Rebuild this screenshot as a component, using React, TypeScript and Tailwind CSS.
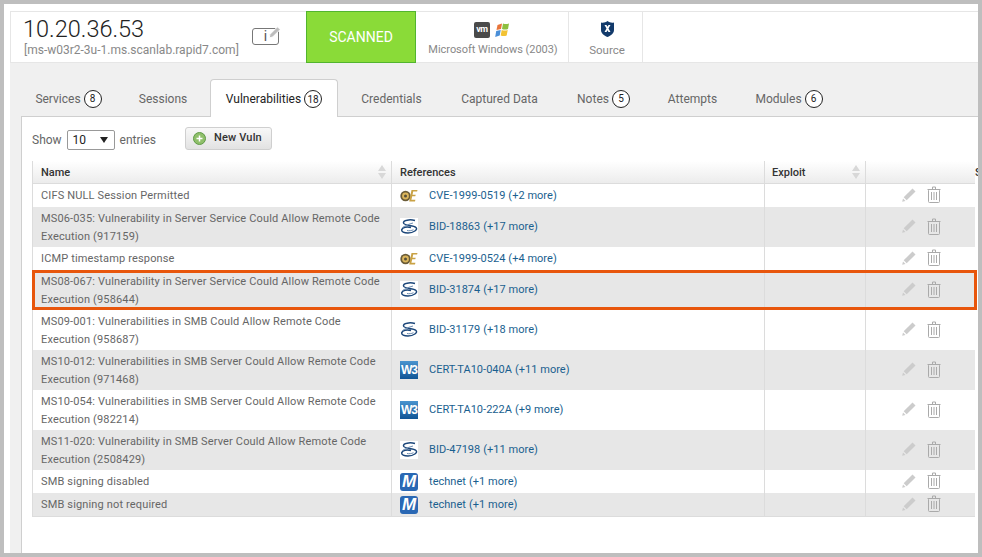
import type { ReactElement, ReactNode } from 'react'

type RefKind = 'cve' | 'bid' | 'w3' | 'ms'

type Vuln = {
  name: string[]
  kind: RefKind
  ref: string
  more: string
  flagged?: boolean
}

const vulns: Vuln[] = [
  { name: ['CIFS NULL Session Permitted'], kind: 'cve', ref: 'CVE-1999-0519', more: '(+2 more)' },
  { name: ['MS06-035: Vulnerability in Server Service Could Allow Remote Code', 'Execution (917159)'], kind: 'bid', ref: 'BID-18863', more: '(+17 more)' },
  { name: ['ICMP timestamp response'], kind: 'cve', ref: 'CVE-1999-0524', more: '(+4 more)' },
  { name: ['MS08-067: Vulnerability in Server Service Could Allow Remote Code', 'Execution (958644)'], kind: 'bid', ref: 'BID-31874', more: '(+17 more)', flagged: true },
  { name: ['MS09-001: Vulnerabilities in SMB Could Allow Remote Code', 'Execution (958687)'], kind: 'bid', ref: 'BID-31179', more: '(+18 more)' },
  { name: ['MS10-012: Vulnerabilities in SMB Server Could Allow Remote Code', 'Execution (971468)'], kind: 'w3', ref: 'CERT-TA10-040A', more: '(+11 more)' },
  { name: ['MS10-054: Vulnerabilities in SMB Server Could Allow Remote Code', 'Execution (982214)'], kind: 'w3', ref: 'CERT-TA10-222A', more: '(+9 more)' },
  { name: ['MS11-020: Vulnerability in SMB Server Could Allow Remote Code', 'Execution (2508429)'], kind: 'bid', ref: 'BID-47198', more: '(+11 more)' },
  { name: ['SMB signing disabled'], kind: 'ms', ref: 'technet', more: '(+1 more)' },
  { name: ['SMB signing not required'], kind: 'ms', ref: 'technet', more: '(+1 more)' },
]

const tabs: { label: string; width: string; count?: number; active?: boolean }[] = [
  { label: 'Services', width: 'w-[95px]', count: 8 },
  { label: 'Sessions', width: 'w-[78px]' },
  { label: 'Vulnerabilities', width: 'w-[128px]', count: 18, active: true },
  { label: 'Credentials', width: 'w-[91px]' },
  { label: 'Captured Data', width: 'w-[109px]' },
  { label: 'Notes', width: 'w-[83px]', count: 5 },
  { label: 'Attempts', width: 'w-[79px]' },
  { label: 'Modules', width: 'w-[98px]', count: 6 },
]

const gridCols = 'grid grid-cols-[359px_373px_101px_110px]'

function CveIcon(): ReactElement {
  return (
    <span className="flex h-[18px] w-[18px] items-center justify-center">
      <svg width="18" height="16" viewBox="0 0 18 16">
        <circle cx="5.500" cy="8" r="5.200" fill="#6a5c38" />
        <circle cx="5.500" cy="8" r="3.400" fill="#dcb65c" />
        <circle cx="5.500" cy="8" r="1.500" fill="#56503a" />
        <path d="M11.500 2h6l-.4 1.400h-3.900l-.7 3.400h3.200l-.4 1.400h-3.100l-.8 3.600h4l-.4 1.700h-5.800z" fill="#c9a245" />
      </svg>
    </span>
  )
}

function BidIcon(): ReactElement {
  return (
    <span className="flex h-[18px] w-[18px] items-center justify-center bg-white">
      <svg width="18" height="18" viewBox="0 0 18 18" fill="none">
        <path d="M15 2.500C10 1.200 3 2 3.500 5c.5 2.800 9.500 2.200 12.500 4.500 2.200 2-2.500 5.500-8 5.500-4 0-6.800-1.200-6.300-3.200.6-2.400 5-3.600 9.300-2.300" stroke="#1b4679" strokeWidth="1.500" />
        <path d="M2.500 9.500C5.500 7.500 9 6 13 5" stroke="#6d8db2" strokeWidth="1" />
        <path d="M7 12.500c2 .5 4.500.2 6.500-.8" stroke="#6d8db2" strokeWidth="1" />
      </svg>
    </span>
  )
}

function W3Icon(): ReactElement {
  return (
    <span className="flex h-[18px] w-[18px] items-center justify-center overflow-hidden bg-gradient-to-b from-[#4a94cf] to-[#0e5596] font-['Liberation_Sans',sans-serif] text-[12px] font-bold tracking-[-0.9px] text-white">
      W3
    </span>
  )
}

function MsIcon(): ReactElement {
  return (
    <span className="flex h-[18px] w-[18px] items-center justify-center overflow-hidden rounded-[3px] bg-[#2a68b4] font-['Liberation_Sans',sans-serif] text-[17px] font-bold italic tracking-normal text-white">
      M
    </span>
  )
}

function RefIcon({ kind }: { kind: RefKind }): ReactElement {
  if (kind === 'cve') return <CveIcon />
  if (kind === 'bid') return <BidIcon />
  if (kind === 'w3') return <W3Icon />
  return <MsIcon />
}

function CountBadge({ children }: { children: ReactNode }): ReactElement {
  return (
    <span className="ml-[3px] flex h-[18px] w-[18px] items-center justify-center rounded-full border border-[#222] bg-white text-[10px] text-[#222]">
      {children}
    </span>
  )
}

function SortArrows(): ReactElement {
  return (
    <svg width="8" height="14" viewBox="0 0 8 14" fill="#d8d8d8">
      <path d="M4 0l4 6H0z" />
      <path d="M4 14l4-6H0z" />
    </svg>
  )
}

function PencilIcon(): ReactElement {
  return (
    <svg width="14" height="14" viewBox="0 0 14 14" fill="#cccccc">
      <path d="M10.500 .5l3 3-8.800 8.800-3-3z" />
      <path d="M1 10.500l2.500 2.500-3.300.8z" />
    </svg>
  )
}

function TrashIcon(): ReactElement {
  return (
    <svg width="14" height="17" viewBox="0 0 14 17" fill="none" stroke="#aaaaaa" strokeWidth="1">
      <path d="M.5 3.500h13M5.500 3.500V1h3v2.500" />
      <rect x="1.500" y="3.500" width="11" height="13" rx="1" />
      <path d="M4.500 6v8M7 6v8M9.500 6v8" />
    </svg>
  )
}

function Row({ vuln, index }: { vuln: Vuln; index: number }): ReactElement {
  const twoLines = vuln.name.length > 1
  return (
    <div className={`${gridCols} relative text-[11px] ${index % 2 === 1 ? 'bg-[#e7e7e7]' : 'bg-white'} ${twoLines ? 'h-[40px]' : 'h-[23px]'}`}>
      <div className={`flex flex-col justify-center border-r border-[#dcdcdc] pl-[8px] leading-[18px] tracking-[0.15px] text-[#666] ${twoLines ? 'pt-[2px]' : ''}`}>
        {vuln.name.map((line) => (
          <span key={line} className="whitespace-nowrap">{line}</span>
        ))}
      </div>
      <div className="flex items-center border-r border-[#dcdcdc] pl-[8px] tracking-[0.03px] text-[#1a5f8f]">
        <RefIcon kind={vuln.kind} />
        <a className={`ml-[11px] ${twoLines ? '' : 'mt-[1px]'}`}>{vuln.ref}</a>
        <span className={`ml-[3px] ${twoLines ? '' : 'mt-[1px]'}`}>{vuln.more}</span>
      </div>
      <div className="border-r border-[#dcdcdc]" />
      <div className="flex items-center justify-center gap-[11px] pb-[2px] pl-[1px]">
        <PencilIcon />
        <TrashIcon />
      </div>
      {vuln.flagged && (
        <div className="absolute -left-px top-0 -right-[2px] bottom-0 border-[3px] border-[#e8560c]" />
      )}
    </div>
  )
}

export default function App(): ReactElement {
  return (
    <div className="h-[557px] w-[982px] overflow-hidden border-4 border-[#bebebe] bg-white pl-[6px] pt-[7px] font-['Roboto',sans-serif] text-[12px]">
      <div className="flex h-[542px] flex-col bg-[#f0f0f0]">
        <header className="flex h-[52px] shrink-0 border-y border-l border-[#e6e6e6] bg-white">
          <div className="w-[228px] pl-[12px]">
            <div className="mt-[4px] text-[23.500px] font-light leading-[26px] text-[#222]">10.20.36.53</div>
            <div className="ml-[1px] mt-[1px] whitespace-nowrap text-[12px] leading-[15px] text-[#888]">[ms-w03r2-3u-1.ms.scanlab.rapid7.com]</div>
          </div>
          <div className="flex w-[67px] items-center pb-[2px] pl-[13px]">
            <span className="relative flex h-[17px] w-[27px] items-center justify-center rounded-[3px] border border-[#777] text-[14px] text-[#555]">
              i
              <svg className="absolute -right-[3px] -top-[3px]" width="13" height="13" viewBox="0 0 13 13" fill="#bdbdbd" stroke="#fff" strokeWidth="1">
                <path d="M9.500 .8l2.700 2.700-7.500 7.500-3.500 1 .8-3.700z" />
              </svg>
            </span>
          </div>
          <div className="-my-px flex w-[110px] items-center justify-center border border-[#52b52e] bg-[#8adb38] text-[14px] text-white">
            SCANNED
          </div>
          <div className="flex w-[153px] flex-col items-center border-r border-[#e6e6e6] pt-[10px]">
            <div className="flex items-center gap-[4px]">
              <span className="flex h-[16px] w-[16px] items-center justify-center rounded-[2px] bg-[#4a4a4a] text-[9px] font-bold tracking-[-0.5px] text-white">vm</span>
              <svg width="16" height="15" viewBox="0 0 16 15">
                <path d="M3.500 2l4.500-1.500-1 5.500-4.500 1z" fill="#e8743a" />
                <path d="M9 .5c2 .8 3.500.8 6 0l-1 5.500c-2 .8-4 .8-6 0z" fill="#8cbf3f" />
                <path d="M2.200 8l4.500-1-1 5.500-4.500 1.500z" fill="#4a8fd8" />
                <path d="M7.700 7c2 .8 4 .8 6 0l-1 5.500c-2 .8-4 .8-6 0z" fill="#f2c233" />
              </svg>
            </div>
            <span className="ml-[2px] mt-[5px] text-[11px] leading-[14px] tracking-[-0.03px] text-[#888]">Microsoft Windows (2003)</span>
          </div>
          <div className="flex w-[74px] flex-col items-center border-r border-[#e6e6e6] pl-[3px] pt-[9px]">
            <svg width="13" height="16" viewBox="0 0 13 16">
              <path d="M0 1.500c2.500.5 4.500 0 6.500-1.500 2 1.500 4 2 6.500 1.500V9c0 3.500-3 5.500-6.500 7C3 14.500 0 12.500 0 9z" fill="#123a6b" />
              <path d="M3.500 4h2l1 1.800L7.500 4h2L7.500 7.500 9.500 11h-2l-1-1.800L5.500 11h-2l2-3.500z" fill="#fff" />
            </svg>
            <span className="mt-[6px] text-[11.500px] leading-[14px] text-[#888]">Source</span>
          </div>
        </header>

        <div className="flex-1 pl-[11px] pt-[16px]">
          <nav className="relative z-10 flex h-[38px] gap-[8px] text-[#666]">
            {tabs.map((tab) => (
              <div
                key={tab.label}
                className={`flex items-center justify-center pt-[1px] ${tab.width} ${tab.active ? 'rounded-t-[4px] border border-b-0 border-[#cfcfcf] bg-white text-[#222]' : ''}`}
              >
                {tab.label}
                {tab.count !== undefined && <CountBadge>{tab.count}</CountBadge>}
              </div>
            ))}
          </nav>
          <section className="-mt-px h-[437px] border-l border-t border-[#cfcfcf] bg-white pl-[10px]">
            <div className="flex items-center pt-[12px] text-[#666]">
              <span className="mt-[1px]">Show</span>
              <span className="ml-[5px] flex h-[20px] w-[48px] items-center justify-between rounded-[2px] border border-[#999] pl-[5px] pr-[6px] text-[#222]">
                10
                <svg width="8" height="6" viewBox="0 0 8 6" fill="#222"><path d="M0 0h8L4 6z" /></svg>
              </span>
              <span className="ml-[5px] mt-[1px]">entries</span>
              <button className="-mt-[2px] ml-[29px] flex h-[23px] w-[87px] items-center rounded-[3px] border border-[#cfcfcf] bg-gradient-to-b from-[#f8f8f8] to-[#e2e2e2] pl-[7px] text-[11px] font-medium tracking-[0.15px] text-[#333]">
                <svg width="13" height="13" viewBox="0 0 13 13">
                  <circle cx="6.500" cy="6.500" r="6" fill="#8fbf6a" stroke="#5f9a46" />
                  <path d="M6.500 3.500v6M3.500 6.500h6" stroke="#fff" strokeWidth="1.500" />
                </svg>
                <span className="ml-[8px]">New Vuln</span>
              </button>
            </div>

            <div className="mt-[11px] w-[943px] border-b border-l border-[#dcdcdc]">
              <div className={`${gridCols} h-[23px] border-b border-[#dcdcdc] bg-gradient-to-b from-white to-[#ececec] text-[11px] font-medium text-[#333]`}>
                <div className="flex items-center justify-between border-r border-[#dcdcdc] pl-[8px] pr-[5px]"><span className="mt-[2px]">Name</span><SortArrows /></div>
                <div className="flex items-center border-r border-[#dcdcdc] pl-[8px]"><span className="mt-[2px]">References</span></div>
                <div className="flex items-center justify-between border-r border-[#dcdcdc] pl-[7px] pr-[5px]"><span className="mt-[2px]">Exploit</span><SortArrows /></div>
                <div className="relative">
                  <span className="absolute left-[109px] top-[4px] w-[3px] overflow-hidden text-[#333]">S</span>
                </div>
              </div>
              {vulns.map((vuln, index) => (
                <Row key={vuln.name[0]} vuln={vuln} index={index} />
              ))}
            </div>
          </section>
        </div>
      </div>
    </div>
  )
}
